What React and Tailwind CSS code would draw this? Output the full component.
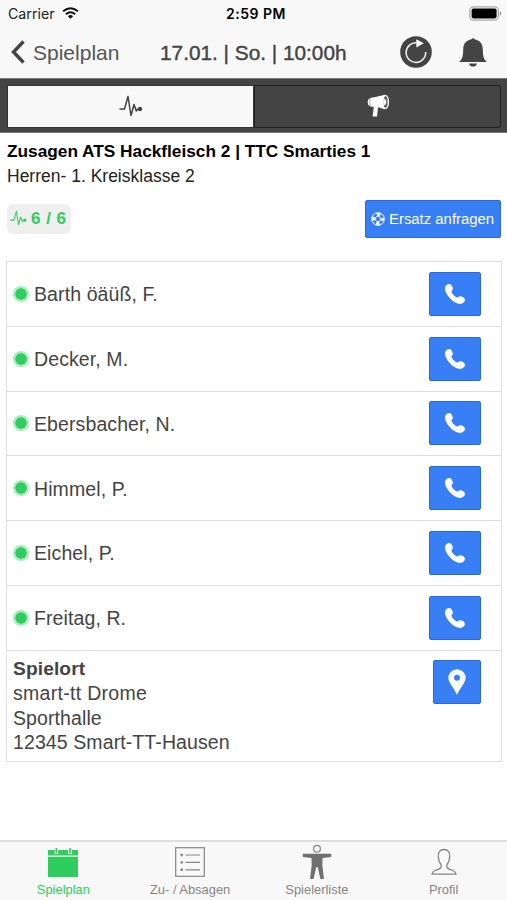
const players = [
  "Barth öäüß, F.",
  "Decker, M.",
  "Ebersbacher, N.",
  "Himmel, P.",
  "Eichel, P.",
  "Freitag, R.",
];

function PulseIcon({ className }) {
  return (
    <svg viewBox="0 0 24 22" className={className} fill="none" stroke="currentColor" strokeWidth="1.5" strokeLinejoin="round">
      <path d="M0.5 14H5.5L9 1.5L12 20.5L15 9.5L17.3 16L18.8 14H21" />
      <circle cx="21" cy="14" r="2.2" fill="currentColor" stroke="none" />
    </svg>
  );
}

function MegaphoneIcon() {
  return (
    <svg viewBox="0 0 24 24" className="w-6 h-6 -mt-[1px]" fill="white">
      <path d="M2.2 5.4Q4.5 3.4 8.5 3.3L18 1V15L12 13.2L11 22.5H6.6L7.8 13Q4 13 2.2 10.8Q1 8 2.2 5.4Z" />
      <ellipse cx="19.2" cy="8" rx="3.9" ry="7.3" />
      <ellipse cx="19.6" cy="8" rx="2.2" ry="5.9" fill="#666" />
      <path d="M4.2 4.6Q3 8 4.4 11.8" fill="none" stroke="#777" strokeWidth="0.7" />
      <path d="M17.4 4.5Q20.4 5.5 20.4 8T17.4 11.5z" />
    </svg>
  );
}

function WifiIcon() {
  return (
    <svg viewBox="0 0 18 13" className="w-[17px] h-[12px] -mt-[2px]" fill="none" stroke="#111" strokeWidth="2.2">
      <path d="M1 4.6Q9-2 17 4.6" />
      <path d="M4 7.8Q9 3.6 14 7.8" />
      <path d="M9 12.8L6.2 9.9Q9 7.6 11.8 9.9Z" fill="#111" stroke="none" />
    </svg>
  );
}

function BatteryIcon() {
  return (
    <svg viewBox="0 0 33 15" className="w-[33px] h-[15px] -mt-[2px]">
      <rect x="0.8" y="0.8" width="28.6" height="13.4" rx="3.6" fill="none" stroke="#aaa" strokeWidth="1.2" />
      <rect x="2.6" y="2.6" width="25" height="9.8" rx="1.8" fill="#000" />
      <path d="M30.7 5v5Q32.2 9 32.2 7.5T30.7 5z" fill="#999" />
    </svg>
  );
}

function RefreshIcon() {
  return (
    <svg viewBox="0 0 32 32" className="w-8 h-8 -mt-[2px]">
      <circle cx="16" cy="16" r="15.8" fill="#444" />
      <path d="M25.7 16A9.8 9.8 0 1 1 16.5 6.8" fill="none" stroke="#eee" strokeWidth="1.5" />
      <path d="M16.3 3.2L23.8 7.3L16.3 11.5z" fill="#fff" />
    </svg>
  );
}

function BellIcon() {
  return (
    <svg viewBox="0 0 28 30" className="w-7 h-[30px]" fill="#444">
      <path d="M12.5 2.2a1.6 1.6 0 0 1 3 0C20.5 3.2 23.5 6.5 23.7 11C24 18.5 24 21.5 28 25H0C4 21.5 4 18.5 4.3 11C4.5 6.5 7.5 3.2 12.5 2.2Z" />
      <path d="M10 26.4h8Q17 29.6 14 29.6T10 26.4z" />
    </svg>
  );
}

function LifebuoyIcon() {
  return (
    <svg viewBox="0 0 14 14" className="w-[14px] h-[14px]" fill="none">
      <circle cx="7" cy="7" r="4.5" stroke="white" strokeWidth="3" strokeDasharray="3.53 3.54" strokeDashoffset="1.77" />
      <circle cx="7" cy="7" r="6.3" stroke="white" strokeWidth="1" />
      <circle cx="7" cy="7" r="2.7" stroke="white" strokeWidth="0.8" />
    </svg>
  );
}

function PhoneIcon() {
  return (
    <svg viewBox="0 0 22 22" className="w-[22px] h-[22px]" fill="white">
      <path d="M1.1 4.4C1.5 2.5 3.3 1 5.2 1C7.2 1 8.9 3.8 8.8 6C8.7 7.3 7.4 7.8 7.5 8.8C7.8 10.6 10.8 13.6 12.8 14.4C14 14.9 14.6 13.4 15.8 13.2C17.9 12.9 21 14.7 21 16.8C21 18.8 18.7 20.9 16.3 20.9C9.6 20.8 0 10.7 1.1 4.4Z" />
    </svg>
  );
}

function PinIcon() {
  return (
    <svg viewBox="0 0 18 26" className="w-[18px] h-[26px]">
      <path fill="white" fillRule="evenodd" d="M9 .2A8.6 8.6 0 0 0 .4 8.8C.4 14 5.8 18.7 9 25.8C12.2 18.7 17.6 14 17.6 8.8A8.6 8.6 0 0 0 9 .2ZM9 5.7a3 3 0 1 1 0 6a3 3 0 0 1 0-6Z" />
    </svg>
  );
}

function CalendarIcon() {
  return (
    <svg viewBox="0 0 30 30" className="w-[30px] h-[30px]" fill="#2fcc5e">
      <path d="M0 3h6.6v4h3.5V3h10.2v4h3.5V3H30v5.6H0z" />
      <path d="M7.5 1H9.2v5H7.5zM21.2 1h1.7v5h-1.7zM0 9.8h30V30H0z" />
    </svg>
  );
}

function ListIcon() {
  return (
    <svg viewBox="0 0 30 30" className="w-[30px] h-[30px]" fill="none" stroke="#858585" strokeWidth="1.2">
      <rect x="0.7" y="0.7" width="28.6" height="28.6" />
      <path d="M10.5 8H25M10.5 15.4H25M10.5 22.8H25" />
      <path d="M5.5 8h2.4M5.5 15.4h2.4M5.5 22.8h2.4" strokeWidth="2.4" />
    </svg>
  );
}

function PersonIcon() {
  return (
    <svg viewBox="0 0 30 36" className="w-[30px] h-[36px]" fill="#707070">
      <circle cx="15" cy="4.7" r="3.4" fill="none" stroke="#858585" strokeWidth="1.2" />
      <path d="M.8 9.7h28.4v3.4l-8.7.8-.2 7.2 1.7 14h-3.6L15.7 23h-1.4l-2.7 12.1H8l1.7-14-.2-7.2-8.7-.8z" />
    </svg>
  );
}

function ProfileIcon() {
  return (
    <svg viewBox="0 0 26 28" className="w-[26px] h-[28px]" fill="none" stroke="#858585" strokeWidth="1.3" strokeLinejoin="round">
      <path d="M13 1.5C9 1.5 7 4.2 7.3 8.5C7.5 12 8.2 14.5 10 16.5C11.2 20.8 7.5 21.2 4.2 22.5C2 23.4 1.2 24.5 1 26.2H25C24.8 24.5 24 23.4 21.8 22.5C18.5 21.2 14.8 20.8 16 16.5C17.8 14.5 18.5 12 18.7 8.5C19 4.2 17 1.5 13 1.5Z" />
    </svg>
  );
}

function StatusBar() {
  return (
    <div className="h-7 grid grid-cols-3 items-center pl-2 pr-[5px] font-['Inter',sans-serif] text-black">
      <div className="flex items-center gap-[7px] text-[14.2px] text-[#222]">
        Carrier <WifiIcon />
      </div>
      <div className="pl-[2px] -mt-px text-center text-[14px] font-semibold tracking-[0.5px] whitespace-nowrap">2:59 PM</div>
      <div className="flex justify-end"><BatteryIcon /></div>
    </div>
  );
}

function Header() {
  return (
    <header className="h-[50px] flex items-center pl-[11px] pr-5 text-[#444]">
      <svg viewBox="0 0 14 24" className="w-[14px] h-6 -mt-[2px] shrink-0" fill="none" stroke="#444" strokeWidth="3.4">
        <path d="M12.5 1.5L2.5 12L12.5 22.5" />
      </svg>
      <span className="ml-2 w-[127px] text-[21px] text-[#555]">Spielplan</span>
      <h1 className="flex-1 text-[20.8px] whitespace-nowrap [-webkit-text-stroke:0.4px_#444]">17.01. | So. | 10:00h</h1>
      <RefreshIcon />
      <div className="ml-[27px] -mt-[3px]"><BellIcon /></div>
    </header>
  );
}

function Tab({ icon, label, active }) {
  return (
    <div className="flex-1 flex flex-col items-center">
      <div className="h-[40px] flex items-center justify-center">{icon}</div>
      <span className={`text-[12.9px] leading-4 ${active ? "text-[#2fcc5e]" : "text-[#858585]"}`}>{label}</span>
    </div>
  );
}

export default function App() {
  return (
    <div className="w-[507px] h-[900px] flex flex-col overflow-hidden bg-white font-['Liberation_Sans',Arial,sans-serif]">
      <div className="bg-[#f8f8f8]">
        <StatusBar />
        <Header />
      </div>

      <div className="h-[55px] shrink-0 border-y border-[#777] bg-[#444] pl-[7px] pr-[6px] pt-[6px] pb-[5px] flex">
        <div className="w-[247px] h-[43px] bg-[#f8f8f8] border border-[#333] flex items-center justify-center text-[#444]">
          <PulseIcon className="w-6 h-[22px] -mt-[2px]" />
        </div>
        <div className="flex-1 h-[43px] border border-[#222] rounded-r-[3px] flex items-center justify-center">
          <MegaphoneIcon />
        </div>
      </div>

      <div className="pl-[7px] pt-[6px]">
        <h2 className="text-[17.25px] leading-6 font-bold text-black whitespace-nowrap">Zusagen ATS Hackfleisch 2 | TTC Smarties 1</h2>
        <p className="pt-px text-[17.5px] leading-6 text-[#222]">Herren- 1. Kreisklasse 2</p>
      </div>

      <div className="mt-3 h-[38px] shrink-0 pl-[7px] pr-[6px] flex items-center justify-between">
        <div className="w-16 h-[30px] rounded-[6px] bg-[#efefef] flex items-center pl-[3px] gap-1 text-[#2fcc5e]">
          <PulseIcon className="w-[17px] h-[16px] -mt-[2px]" />
          <span className="text-[17px] font-bold tracking-[0.5px] whitespace-nowrap">6 / 6</span>
        </div>
        <button className="w-[136px] h-[38px] rounded-[2px] border border-[#2b69d8] bg-[#387ef5] text-white flex items-center pl-[5px] gap-1 text-[14.9px] whitespace-nowrap">
          <LifebuoyIcon /> <span className="pt-px">Ersatz anfragen</span>
        </button>
      </div>

      <div className="mt-[23px] ml-[6px] mr-[5px] h-[501px] shrink-0 border border-[#ddd] text-[19.5px] tracking-[0.1px] text-[#444] flex flex-col">
        {players.map((name) => (
          <div key={name} className="h-[64.8px] shrink-0 border-b border-[#ddd] flex items-center pl-[6px] pr-5">
            <span className="w-4 h-4 rounded-full border-2 border-[#a5edbc] bg-[#2fcc5e] bg-clip-padding" />
            <span className="ml-[5px] pt-[2px] flex-1">{name}</span>
            <button className="w-[52px] h-[44px] rounded-[2px] border border-[#2b69d8] bg-[#387ef5] flex items-center justify-center">
              <PhoneIcon />
            </button>
          </div>
        ))}
        <div className="flex-1 flex justify-between pl-[6px] pr-5 pt-[6px]">
          <div className="leading-[24.5px]">
            <b className="block text-[19.2px]">Spielort</b>
            <p className="tracking-[0.3px]">smart-tt Drome</p>
            <p>Sporthalle</p>
            <p>12345 Smart-TT-Hausen</p>
          </div>
          <button className="mt-[3px] w-12 h-[44px] rounded-[2px] border border-[#2b69d8] bg-[#387ef5] flex items-center justify-center">
            <PinIcon />
          </button>
        </div>
      </div>

      <nav className="mt-auto h-[60px] shrink-0 bg-[#f8f8f8] border-t-2 border-[#ddd] flex">
        <Tab icon={<CalendarIcon />} label="Spielplan" active />
        <Tab icon={<ListIcon />} label="Zu- / Absagen" />
        <Tab icon={<PersonIcon />} label="Spielerliste" />
        <Tab icon={<ProfileIcon />} label="Profil" />
      </nav>
    </div>
  );
}
